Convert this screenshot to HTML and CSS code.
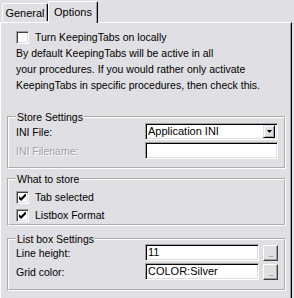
FILE: index.html
```html
<!DOCTYPE html>
<html lang="en">
<head>
  <meta charset="UTF-8" />
  <title>KeepingTabs Options</title>
  <link rel="stylesheet" href="styles.css">
</head>
<body>
  <!-- Tab strip -->
  <div class="tabs">
    <div class="tab">General</div>
    <div class="tab active">Options</div>
  </div>

  <div class="panel">
    <label class="check">
      <span class="box"></span>
      <span>Turn KeepingTabs on locally</span>
    </label>
    <p class="note">
      By default KeepingTabs will be active in all<br>
      your procedures. If you would rather only activate<br>
      KeepingTabs in specific procedures, then check this.
    </p>

    <!-- Store Settings -->
    <fieldset class="group store">
      <legend>Store Settings</legend>
      <div class="row">
        <span>INI File:</span>
        <div class="combo">
          <span class="combo-text">Application INI</span>
          <span class="drop">
            <svg width="5" height="3" viewBox="0 0 5 3"><path d="M0 0h5L2.5 3z" fill="#000"/></svg>
          </span>
        </div>
      </div>
      <div class="row">
        <span class="disabled">INI Filename:</span>
        <div class="edit"></div>
      </div>
    </fieldset>

    <!-- What to store -->
    <fieldset class="group what">
      <legend>What to store</legend>
      <label class="check">
        <span class="box checked">
          <svg width="7" height="7" viewBox="0 0 7 7"><path d="M0 2v3l2 2 5-5V-1L2 4z" fill="#000"/></svg>
        </span>
        <span>Tab selected</span>
      </label>
      <label class="check">
        <span class="box checked">
          <svg width="7" height="7" viewBox="0 0 7 7"><path d="M0 2v3l2 2 5-5V-1L2 4z" fill="#000"/></svg>
        </span>
        <span>Listbox Format</span>
      </label>
    </fieldset>

    <!-- List box Settings -->
    <fieldset class="group listbox">
      <legend>List box Settings</legend>
      <div class="row">
        <span>Line height:</span>
        <div class="pick">
          <div class="edit">11</div>
          <span class="dots">...</span>
        </div>
      </div>
      <div class="row">
        <span>Grid color:</span>
        <div class="pick">
          <div class="edit">COLOR:Silver</div>
          <span class="dots">...</span>
        </div>
      </div>
    </fieldset>
  </div>
</body>
</html>
```

FILE: styles.css
```css
body {
  margin: 0;
  background: #e0dfe3;
  font-family: 'Liberation Sans', Arial, sans-serif;
  font-size: 10.5px;
  color: #000;
  overflow: hidden;
}

.tabs {
  display: flex;
  align-items: flex-end;
  height: 22px;
  padding-left: 2px;
}

.tab {
  box-sizing: border-box;
  width: 46px;
  height: 18px;
  margin-bottom: 1px;
  border-top: 1px solid #fff;
  border-left: 1px solid #fff;
  border-right: 1px solid #000;
  border-radius: 2px 2px 0 0;
  box-shadow: inset -1px 0 #a0a0a0;
  text-align: center;
  line-height: 18px;
  font-size: 11px;
}

.tab.active {
  width: 50px;
  height: 22px;
  margin-bottom: -1px;
  position: relative;
  background: #e0dfe3;
  line-height: 20px;
}

.panel {
  box-sizing: border-box;
  width: 292px;
  height: 280px;
  border-top: 1px solid #fff;
  border-left: 1px solid #fff;
  border-right: 1px solid #000;
  box-shadow: inset -1px 0 #a0a0a0;
  padding: 6px 5px 0 6px;
}

.check {
  display: flex;
  align-items: center;
  height: 16px;
  gap: 6px;
  margin-left: 9px;
}

.box {
  box-sizing: border-box;
  width: 13px;
  height: 13px;
  flex: none;
  border: 1px solid;
  border-color: #a0a0a0 #fff #fff #a0a0a0;
  box-shadow: inset 1px 1px #404040, inset -1px -1px #e0dfe3;
  background: #fff;
  display: flex;
  align-items: center;
  justify-content: center;
}

.note {
  margin: 0 0 0 9px;
  line-height: 16px;
}

.group {
  margin: 19px 0 0 0;
  padding: 1px 7px 8px 7px;
  border: 2px groove #fff;
  min-width: 0;
}

.group legend {
  padding: 0 1px;
  line-height: 10px;
}

.what {
  margin-top: 5px;
  padding: 4px 7px 0 7px;
}

.what .check {
  margin-left: 0;
  height: 18px;
}

.listbox {
  margin-top: 8px;
  padding: 0 7px 9px 7px;
}

.row {
  display: grid;
  grid-template-columns: 129px 133px;
  align-items: center;
  height: 17px;
  margin-bottom: 2px;
}

.row:last-child {
  margin-bottom: 0;
}

.disabled {
  color: #a0a0a0;
  text-shadow: 1px 1px #fff;
}

.combo,
.edit {
  box-sizing: border-box;
  height: 17px;
  border: 1px solid;
  border-color: #a0a0a0 #fff #fff #a0a0a0;
  box-shadow: inset 1px 1px #000, inset -1px -1px #e0dfe3;
  background: #fff;
  padding: 0 2px;
  line-height: 15px;
  font-size: 11px;
}

.combo {
  display: flex;
  align-items: center;
  justify-content: space-between;
  padding-right: 2px;
}

.drop {
  box-sizing: border-box;
  width: 12px;
  height: 13px;
  background: #e0dfe3;
  border: 1px solid;
  border-color: #e0dfe3 #000 #000 #e0dfe3;
  box-shadow: inset 1px 1px #fff, inset -1px -1px #a0a0a0;
  display: flex;
  align-items: center;
  justify-content: center;
}

.pick {
  display: flex;
  align-items: center;
  gap: 4px;
}

.pick .edit {
  width: 114px;
}

.dots {
  box-sizing: border-box;
  width: 15px;
  height: 16px;
  border: 1px solid;
  border-color: #fff #404040 #404040 #fff;
  box-shadow: inset -1px -1px #a0a0a0;
  color: #808080;
  font-size: 9px;
  line-height: 17px;
  text-align: center;
  letter-spacing: -1px;
}
```
